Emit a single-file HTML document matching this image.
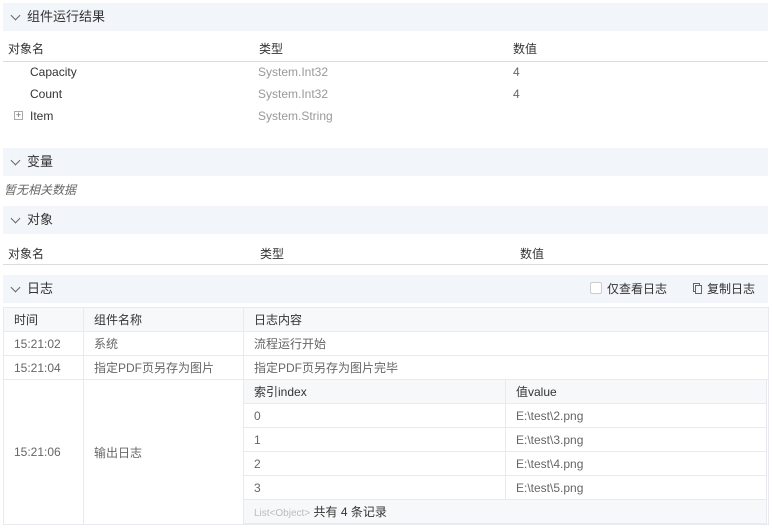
<!DOCTYPE html>
<html><head><meta charset="utf-8"><style>
*{margin:0;padding:0;box-sizing:border-box}
body{width:772px;height:529px;background:#fff;font-family:"Liberation Sans","Noto Sans CJK SC",sans-serif;font-size:12px;color:#333;position:relative;overflow:hidden}
.a{position:absolute;white-space:nowrap}
.hd{position:absolute;left:3px;width:765px;height:28px;background:#f2f5fa;font-size:13px;line-height:28px;padding-left:24px;color:#333}
.hd:before{content:"";position:absolute;left:9px;top:9px;width:6px;height:6px;border-right:1px solid #666;border-bottom:1px solid #666;transform:rotate(45deg)}
.g{color:#999}.m{color:#666}
table{border-collapse:collapse;position:absolute}
td{border:1px solid #e8eaef;height:24px;padding:0 10px;color:#666;vertical-align:middle}
.th td{background:#f7f8fa;color:#333}
</style></head><body>
<div class="hd" style="top:3px">组件运行结果</div>
<div class="a" style="left:8px;top:40px">对象名</div>
<div class="a" style="left:259px;top:40px">类型</div>
<div class="a" style="left:513px;top:40px">数值</div>
<div class="a" style="left:3px;top:61px;width:765px;height:1px;background:#ddd"></div>
<div class="a" style="left:30px;top:65px">Capacity</div><div class="a g" style="left:258px;top:65px">System.Int32</div><div class="a m" style="left:513px;top:65px">4</div>
<div class="a" style="left:30px;top:87px">Count</div><div class="a g" style="left:258px;top:87px">System.Int32</div><div class="a m" style="left:513px;top:87px">4</div>
<div class="a" style="left:14px;top:111px;width:9px;height:9px;border:1px solid #aaa;font-size:9px;line-height:7px;text-align:center;color:#666">+</div>
<div class="a" style="left:30px;top:109px">Item</div><div class="a g" style="left:258px;top:109px">System.String</div>
<div class="hd" style="top:148px">变量</div>
<div class="a m" style="left:4px;top:181px;font-style:italic">暂无相关数据</div>
<div class="hd" style="top:206px">对象</div>
<div class="a" style="left:8px;top:245px">对象名</div>
<div class="a" style="left:260px;top:245px">类型</div>
<div class="a" style="left:520px;top:245px">数值</div>
<div class="a" style="left:3px;top:264px;width:765px;height:1px;background:#ddd"></div>
<div class="hd" style="top:275px">日志
<span class="a" style="left:587px;top:7px;width:12px;height:12px;border:1px solid #ccc;border-radius:2px;background:#fff"></span>
<span class="a" style="left:604px;top:0;font-size:12px">仅查看日志</span>
<span class="a" style="left:690px;top:8px;width:7px;height:9px;border:1px solid #666"></span>
<span class="a" style="left:692px;top:10px;width:7px;height:9px;border:1px solid #666;background:#f2f5fa"></span>
<span class="a" style="left:704px;top:0;font-size:12px">复制日志</span></div>
<table style="left:3px;top:307px;width:766px">
<tr class="th"><td style="width:80px">时间</td><td style="width:160px">组件名称</td><td>日志内容</td></tr>
<tr><td>15:21:02</td><td>系统</td><td>流程运行开始</td></tr>
<tr><td>15:21:04</td><td>指定PDF页另存为图片</td><td>指定PDF页另存为图片完毕</td></tr>
<tr><td style="height:145px">15:21:06</td><td>输出日志</td><td style="padding:0"></td></tr>
</table>
<table style="left:243px;top:379px;width:524px">
<tr class="th"><td style="width:262px">索引index</td><td>值value</td></tr>
<tr><td>0</td><td>E:\test\2.png</td></tr>
<tr><td>1</td><td>E:\test\3.png</td></tr>
<tr><td>2</td><td>E:\test\4.png</td></tr>
<tr><td>3</td><td>E:\test\5.png</td></tr>
<tr><td colspan="2" style="background:#f7f8fa;color:#333"><span style="color:#bbb;font-size:10px">List&lt;Object&gt;</span> 共有 4 条记录</td></tr>
</table>
</body></html>
